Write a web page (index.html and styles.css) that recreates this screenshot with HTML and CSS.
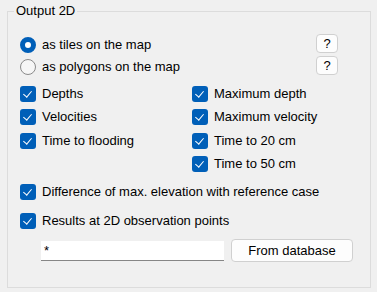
FILE: index.html
```html
<!DOCTYPE html>
<html lang="en">
<head>
    <meta charset="UTF-8">
    <title>Output 2D</title>
    <link rel="stylesheet" href="styles.css">
</head>
<body>
    <fieldset class="group">
        <legend class="group-title">Output 2D</legend>

        <!-- display mode -->
        <div class="row row-radio">
            <span class="radio checked"></span>
            <span class="label">as tiles on the map</span>
            <span class="help">?</span>
        </div>
        <div class="row row-radio">
            <span class="radio"></span>
            <span class="label">as polygons on the map</span>
            <span class="help">?</span>
        </div>

        <!-- result layers -->
        <div class="grid">
            <div class="row"><span class="check"></span><span class="label">Depths</span></div>
            <div class="row"><span class="check"></span><span class="label">Maximum depth</span></div>
            <div class="row"><span class="check"></span><span class="label">Velocities</span></div>
            <div class="row"><span class="check"></span><span class="label">Maximum velocity</span></div>
            <div class="row"><span class="check"></span><span class="label">Time to flooding</span></div>
            <div class="row"><span class="check"></span><span class="label">Time to 20 cm</span></div>
            <div></div>
            <div class="row"><span class="check"></span><span class="label">Time to 50 cm</span></div>
        </div>

        <div class="row row-wide"><span class="check"></span><span class="label">Difference of max. elevation with reference case</span></div>
        <div class="row row-wide"><span class="check"></span><span class="label">Results at 2D observation points</span></div>

        <div class="db-row">
            <input class="db-input" type="text" value="*">
            <button class="btn">From database</button>
        </div>
    </fieldset>
</body>
</html>
```

FILE: styles.css
```css
body {
    margin: 0;
    background-color: #f0f0f0;
    font-family: "Liberation Sans", Arial, sans-serif;
    font-size: 13px;
    color: #000;
}
.group {
    box-sizing: border-box;
    width: 364px;
    height: 288px;
    margin: 0 0 0 7px;
    padding: 12px 0 0 12px;
    border: 1px solid #dcdcdc;
}
.group-title {
    margin-left: -6px;
    padding: 0 2px;
    line-height: 22px;
}
.row {
    display: flex;
    align-items: center;
    height: 23px;
}
.row-radio {
    width: 318px;
    height: 22px;
    align-items: flex-start;
}
.row-radio .radio,
.row-radio .label {
    margin-top: 3px;
}
.row-radio .label {
    line-height: 16px;
}
.help {
    margin-left: auto;
    width: 20px;
    height: 17px;
    border: 1px solid #d0d0d0;
    border-radius: 4px;
    background-color: #fdfdfd;
    text-align: center;
    line-height: 17px;
}
.radio {
    box-sizing: border-box;
    width: 16px;
    height: 16px;
    border: 1px solid #8a8a8a;
    border-radius: 50%;
    background-color: #f6f6f6;
    margin-right: 6px;
    flex-shrink: 0;
}
.radio.checked {
    border: 5px solid #005fb8;
    background-color: #fff;
}
.check {
    position: relative;
    width: 16px;
    height: 16px;
    border-radius: 3px;
    background-color: #005fb8;
    margin-right: 6px;
    flex-shrink: 0;
}
.check::after {
    content: "";
    position: absolute;
    left: 5px;
    top: 3px;
    width: 4px;
    height: 7px;
    border: solid #fff;
    border-width: 0 1px 1px 0;
    transform: rotate(40deg);
}
.grid {
    display: grid;
    grid-template-columns: 172px 1fr;
    grid-template-rows: 23px 24px 23px 23px;
    margin-top: 4px;
}
.row-wide {
    margin-top: 5px;
}
.row-wide + .row-wide {
    margin-top: 6px;
}
.db-row {
    display: flex;
    align-items: center;
    margin: 7px 0 0 21px;
}
.db-input {
    box-sizing: border-box;
    width: 183px;
    height: 20px;
    margin: 0;
    padding: 0 3px;
    border: none;
    border-bottom: 1px solid #868686;
    background-color: #fff;
    font-family: inherit;
    font-size: 13px;
}
.btn {
    box-sizing: border-box;
    width: 122px;
    height: 23px;
    margin-left: 7px;
    border: 1px solid #d0d0d0;
    border-radius: 4px;
    background-color: #fdfdfd;
    font-family: inherit;
    font-size: 13px;
    color: #000;
}
```
